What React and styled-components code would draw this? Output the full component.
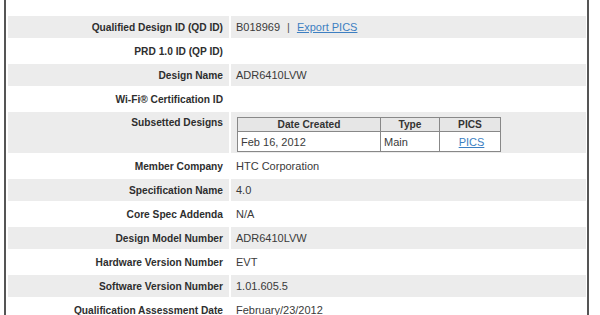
import React from 'react';
import styled, { createGlobalStyle } from 'styled-components';

const GlobalStyle = createGlobalStyle`
  html, body {
    margin: 0;
    padding: 0;
    background: #fff;
  }
  body {
    font-family: "Liberation Sans", Arial, Helvetica, sans-serif;
    color: #333;
  }
`;

const Frame = styled.div`
  width: 585px;
  height: 315px;
  margin-left: 4px;
  padding: 16px 5px 0 2px;
  box-sizing: border-box;
  border-left: 2px solid #555;
  border-right: 2px solid #555;
  overflow: hidden;
`;

const DetailTable = styled.table`
  width: 582px;
  border-collapse: separate;
  border-spacing: 2px;
  margin: -2px -2px;
  table-layout: fixed;
`;

const Row = styled.tr`
  background: ${(p) => (p.$shade ? '#ececec' : '#fff')};
`;

const Label = styled.th`
  width: 221px;
  height: 22px;
  padding: ${(p) => (p.$top ? '5px' : '0')} 6px 0 0;
  text-align: right;
  vertical-align: ${(p) => (p.$top ? 'top' : 'middle')};
  font-size: 10.2px;
  font-weight: bold;
  color: #2e2e2e;
  white-space: nowrap;
  box-sizing: border-box;
`;

const Value = styled.td`
  height: ${(p) => (p.$tall ? '41px' : '22px')};
  padding: 0 0 0 5px;
  font-size: 11px;
  color: #3a3a3a;
  vertical-align: ${(p) => (p.$tall ? 'top' : 'middle')};
  white-space: nowrap;
  box-sizing: border-box;
`;

const Link = styled.a`
  color: #3d7fc2;
  text-decoration: underline;
  cursor: pointer;
`;

const Divider = styled.span`
  margin: 0 7px;
  color: #555;
`;

const SubTable = styled.table`
  width: 262px;
  margin: 5px 0 0 1px;
  border-collapse: collapse;
  border: 1px solid #666;
  background: #fff;
  table-layout: fixed;
`;

const SubHead = styled.th`
  height: 13px;
  padding: 0;
  background: #e6e6e6;
  border: 1px solid #888;
  font-size: 10.2px;
  font-weight: bold;
  color: #333;
  text-align: center;
  width: ${(p) => p.$w}px;
`;

const SubCell = styled.td`
  height: 19px;
  padding: 0 0 0 3px;
  border: 1px solid #888;
  font-size: 11px;
  color: #3a3a3a;
  text-align: ${(p) => (p.$center ? 'center' : 'left')};
`;

const rows = [
  { label: 'Qualified Design ID (QD ID)', value: 'qdid' },
  { label: 'PRD 1.0 ID (QP ID)', value: '' },
  { label: 'Design Name', value: 'ADR6410LVW' },
  { label: 'Wi-Fi® Certification ID', value: '' },
  { label: 'Subsetted Designs', value: 'subset' },
  { label: 'Member Company', value: 'HTC Corporation' },
  { label: 'Specification Name', value: '4.0' },
  { label: 'Core Spec Addenda', value: 'N/A' },
  { label: 'Design Model Number', value: 'ADR6410LVW' },
  { label: 'Hardware Version Number', value: 'EVT' },
  { label: 'Software Version Number', value: '1.01.605.5' },
  { label: 'Qualification Assessment Date', value: 'February/23/2012' },
];

function Subsetted() {
  return (
    <SubTable>
      <thead>
        <tr>
          <SubHead $w={142}>Date Created</SubHead>
          <SubHead $w={58}>Type</SubHead>
          <SubHead $w={60}>PICS</SubHead>
        </tr>
      </thead>
      <tbody>
        <tr>
          <SubCell>Feb 16, 2012</SubCell>
          <SubCell>Main</SubCell>
          <SubCell $center>
            <Link>PICS</Link>
          </SubCell>
        </tr>
      </tbody>
    </SubTable>
  );
}

function renderValue(value) {
  if (value === 'qdid') {
    return (
      <>
        B018969<Divider>|</Divider>
        <Link>Export PICS</Link>
      </>
    );
  }
  if (value === 'subset') return <Subsetted />;
  return value;
}

export default function App() {
  return (
    <>
      <GlobalStyle />
      <Frame>
        <DetailTable>
          <tbody>
            {rows.map((r, i) => {
              const tall = r.value === 'subset';
              return (
                <Row key={r.label} $shade={i % 2 === 0}>
                  <Label $top={tall}>{r.label}</Label>
                  <Value $tall={tall}>{renderValue(r.value)}</Value>
                </Row>
              );
            })}
          </tbody>
        </DetailTable>
      </Frame>
    </>
  );
}
